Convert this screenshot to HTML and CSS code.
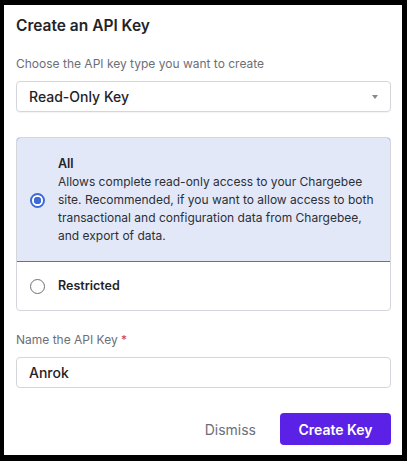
FILE: index.html
```html
<!DOCTYPE html>
<html>
<head>
  <meta charset="UTF-8">
  <title>Create an API Key</title>
  <link rel="stylesheet" href="styles.css">
</head>
<body>
  <div class="modal">
    <h2 class="title">Create an API Key</h2>

    <p class="hint">Choose the API key type you want to create</p>
    <div class="select">
      <span>Read-Only Key</span>
      <span class="caret"></span>
    </div>

    <div class="options">
      <label class="option selected">
        <span class="radio checked"></span>
        <span class="option-text">
          <strong>All</strong>
          <span class="desc">Allows complete read-only access to your Chargebee site. Recommended, if you want to allow access to both transactional and configuration data from Chargebee, and export of data.</span>
        </span>
      </label>
      <label class="option">
        <span class="radio"></span>
        <span class="option-text"><strong>Restricted</strong></span>
      </label>
    </div>

    <label class="field-label">Name the API Key <span class="req">*</span></label>
    <div class="input">Anrok</div>

    <div class="actions">
      <button class="btn-link">Dismiss</button>
      <button class="btn-primary">Create Key</button>
    </div>
  </div>
</body>
</html>
```

FILE: styles.css
```css
html, body { margin: 0; background: #000; }
body { padding: 5px 5px 6px 4px; font-family: Inter, "Noto Sans", sans-serif; color: #1f2329; }
.modal { background: #fff; height: 450px; padding: 9px 11px 0 12px; box-sizing: border-box; }
.title { font-size: 15.5px; font-weight: 600; margin: 0; line-height: 24px; }
.hint { font-size: 12px; color: #6b6f78; margin: 16px 0 0; line-height: 20px; }
.select { margin-top: 7px; height: 31px; border: 1px solid #d4d6db; border-radius: 4px; box-sizing: border-box; display: flex; align-items: center; justify-content: space-between; padding: 0 12px 0 12px; font-size: 14px; font-weight: 500; box-shadow: 0 1px 1px rgba(0,0,0,0.05); }
.caret { width: 0; height: 0; border-left: 3.5px solid transparent; border-right: 3.5px solid transparent; border-top: 4px solid #888; }
.options { margin-top: 25px; border: 1px solid #d4d6db; border-radius: 4px; overflow: hidden; }
.option { display: flex; align-items: center; gap: 13px; padding: 0 13px; height: 48px; }
.option.selected { background: #e3e8f8; border: 1px solid #4a72d8; margin: -1px -1px 0; padding: 17px 13px 16px; height: auto; border-radius: 4px 4px 0 0; }
.radio { width: 15px; height: 15px; border: 1.5px solid #6d6f75; border-radius: 50%; box-sizing: border-box; flex: none; }
.radio.checked { border: 2px solid #3c6bd9; background: radial-gradient(circle, #3c6bd9 0 3.5px, #fff 4px); }
.option-text { font-size: 12px; line-height: 18px; }
.option-text strong { display: block; font-weight: 600; font-size: 12.5px; }
.desc { display: block; color: #2b2f36; }
.field-label { display: block; font-size: 12px; color: #6b6f78; margin-top: 20px; line-height: 18px; }
.req { color: #d93a3a; }
.input { margin-top: 8px; height: 31px; border: 1px solid #d4d6db; border-radius: 4px; box-sizing: border-box; padding: 0 12px; display: flex; align-items: center; font-size: 14px; font-weight: 500; }
.actions { display: flex; justify-content: flex-end; align-items: center; gap: 24px; margin-top: 25px; }
.btn-link { background: none; border: none; font-family: inherit; font-size: 14px; color: #6b6f78; padding: 0; }
.btn-primary { background: #5b21e6; color: #fff; border: none; border-radius: 4px; font-family: inherit; font-size: 14px; font-weight: 600; width: 111px; height: 32px; }
```
